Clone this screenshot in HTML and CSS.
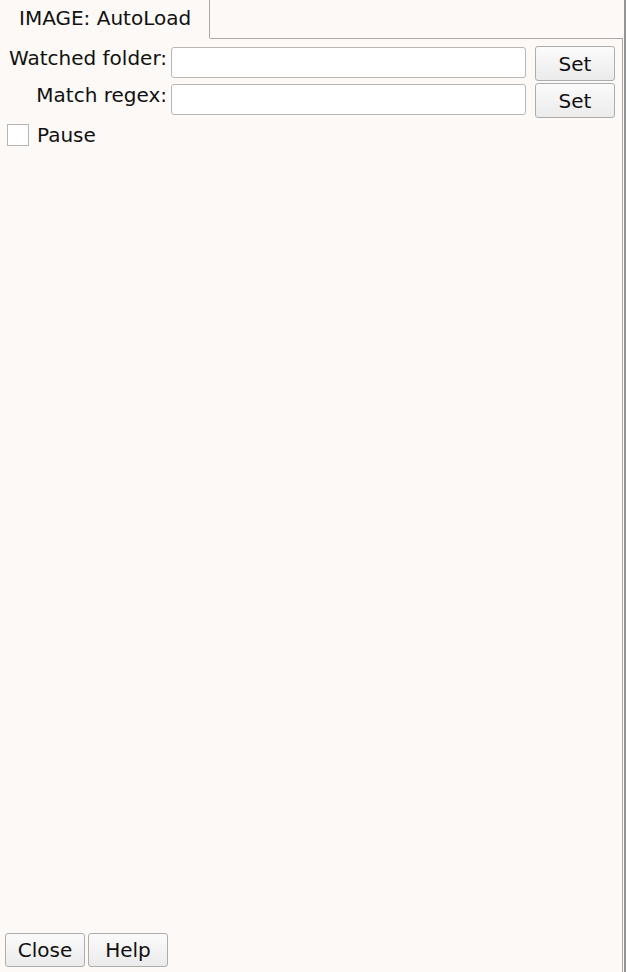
FILE: index.html
```html
<!DOCTYPE html>
<html>
<head>
<meta charset="utf-8">
<title>IMAGE: AutoLoad</title>
<link rel="stylesheet" href="styles.css">
</head>
<body>
<div class="window">
  <div class="tabbar">
    <div class="tab">IMAGE: AutoLoad</div>
  </div>
  <div class="panel">
    <div class="form">
      <label class="label">Watched folder:</label>
      <input class="field" type="text">
      <button class="btn set">Set</button>
      <label class="label">Match regex:</label>
      <input class="field" type="text">
      <button class="btn set">Set</button>
    </div>
    <div class="check-row">
      <span class="checkbox"></span>
      <span class="check-label">Pause</span>
    </div>
    <div class="spacer"></div>
    <div class="actions">
      <button class="btn action">Close</button>
      <button class="btn action">Help</button>
    </div>
  </div>
</div>
</body>
</html>
```

FILE: styles.css
```css
html, body {
  margin: 0;
  padding: 0;
  background: #fcf9f6;
}

body {
  font-family: "DejaVu Sans", "Liberation Sans", sans-serif;
  font-size: 20px;
  color: #111;
}

.window {
  height: 972px;
  width: 626px;
  box-sizing: border-box;
  border-right: 2px solid #949494;
  display: flex;
  flex-direction: column;
}

.tabbar {
  height: 38px;
  display: flex;
  flex-shrink: 0;
}

.tab {
  width: 210px;
  box-sizing: border-box;
  border-right: 1px solid #a8a8a8;
  padding-left: 19px;
  padding-top: 7px;
  line-height: 23px;
  white-space: nowrap;
}

.panel {
  flex: 1;
  margin-left: 210px;
  margin-right: 1px;
  border-top: 1px solid #a8a8a8;
  border-right: 1px solid #a8a8a8;
  display: flex;
  flex-direction: column;
}

.panel > * {
  margin-left: -210px;
}

.form {
  display: grid;
  grid-template-columns: 159px 355px 80px;
  column-gap: 4px;
  row-gap: 2px;
  padding: 7px 0 0 8px;
}

.form .set {
  margin-left: 5px;
}

.label {
  text-align: right;
  line-height: 23px;
  margin-top: 1px;
  white-space: nowrap;
}

.field {
  box-sizing: border-box;
  height: 31px;
  margin-top: 1px;
  border: 1px solid #b7b7b7;
  border-radius: 3px;
  background: #fff;
  padding: 0 4px;
  font: inherit;
  outline: none;
  width: 355px;
}

.btn {
  box-sizing: border-box;
  height: 35px;
  border: 1px solid #adadad;
  border-radius: 3px;
  background: linear-gradient(#fbfbfb, #ebebeb);
  font-family: inherit;
  font-size: 20px;
  color: #111;
  padding: 0;
  line-height: 23px;
}

.set {
  width: 80px;
  padding-top: 2px;
}

.check-row {
  display: flex;
  align-items: center;
  padding: 5px 0 0 7px;
  height: 24px;
}

.checkbox {
  width: 22px;
  height: 22px;
  box-sizing: border-box;
  border: 1px solid #b7b7b7;
  background: #fff;
}

.check-label {
  margin-left: 8px;
  line-height: 23px;
}

.spacer {
  flex: 1;
}

.actions {
  display: flex;
  gap: 3px;
  padding: 0 0 5px 5px;
}

.action {
  width: 80px;
  height: 34px;
  padding-top: 1px;
}
```
